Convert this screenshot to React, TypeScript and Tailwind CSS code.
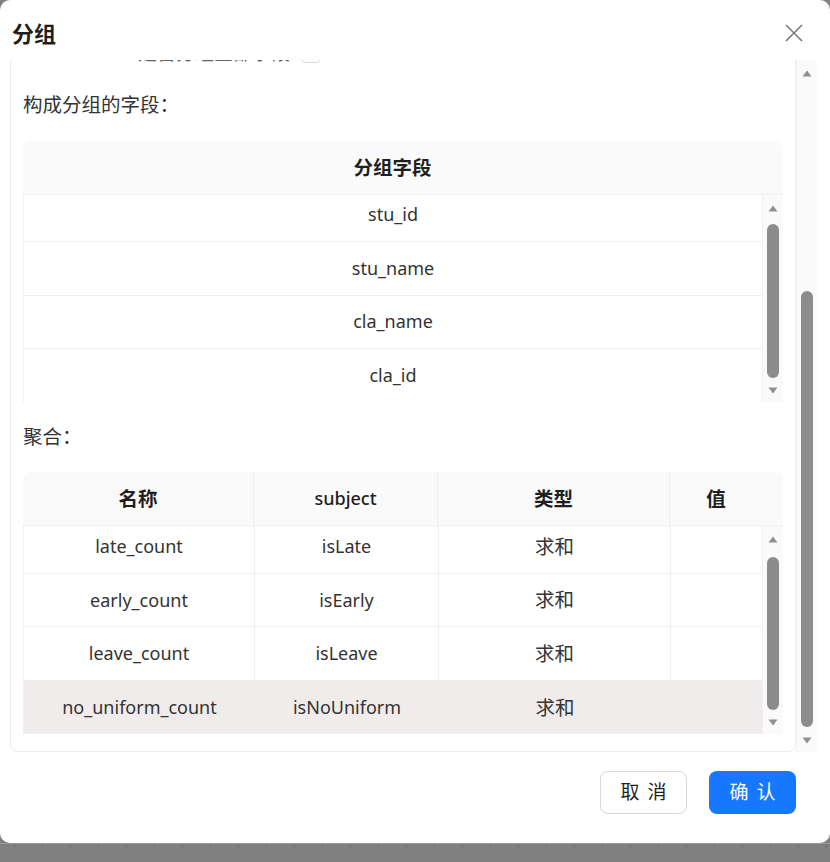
import React from 'react'

const font = { fontFamily: '"Noto Sans", "Noto Sans CJK SC", sans-serif' }

const groupFields = ['stu_id', 'stu_name', 'cla_name', 'cla_id', 'grade_id']

const aggRows = [
  { name: 'late_count', subject: 'isLate', type: '求和' },
  { name: 'early_count', subject: 'isEarly', type: '求和' },
  { name: 'leave_count', subject: 'isLeave', type: '求和' },
  { name: 'no_uniform_count', subject: 'isNoUniform', type: '求和', active: true },
]

function ArrowUp({ className = '' }: { className?: string }) {
  return (
    <svg width="10" height="7" viewBox="0 0 10 7" className={className}>
      <path d="M5 0.5 L9.5 6.5 L0.5 6.5 Z" fill="#8f8f8f" />
    </svg>
  )
}

function ArrowDown({ className = '' }: { className?: string }) {
  return (
    <svg width="10" height="7" viewBox="0 0 10 7" className={className}>
      <path d="M0.5 0.5 L9.5 0.5 L5 6.5 Z" fill="#8f8f8f" />
    </svg>
  )
}

function InnerScrollbar({ thumbTop, thumbHeight }: { thumbTop: number; thumbHeight: number }) {
  return (
    <div className="w-[21px] shrink-0 bg-[#fafafa] border-l border-[#f0f0f0] flex flex-col items-center">
      <ArrowUp className="mt-[10px] shrink-0" />
      <div
        className="w-[12px] shrink-0 rounded-full bg-[#8c8c8c]"
        style={{ marginTop: thumbTop, height: thumbHeight }}
      />
      <ArrowDown className="mt-[9px] shrink-0" />
    </div>
  )
}

export default function App() {
  return (
    <div className="w-[830px] h-[862px] bg-[#808080] overflow-hidden text-[#333]" style={font}>
      <div className="h-[843px] bg-white rounded-[10px] flex flex-col">
        {/* header */}
        <div className="h-[60px] shrink-0 flex items-center justify-between pl-3 pr-[27px] pt-[6px]">
          <h2 className="text-[22px] font-bold text-[#1f1f1f] leading-none">分组</h2>
          <svg width="18" height="18" viewBox="0 0 18 18">
            <path d="M1 1 L17 17 M17 1 L1 17" stroke="#7a7a7a" strokeWidth="1.6" />
          </svg>
        </div>

        {/* body */}
        <div className="h-[692px] shrink-0 flex ml-[10px] mr-[13px]">
          <div className="flex-1 border border-t-0 border-[#ececec] rounded-b-lg overflow-hidden px-[12px]">
            {/* row scrolled out of view: only its lower edge still shows */}
            <div className="h-[3px] overflow-hidden flex flex-col justify-end">
              <div className="h-[22px] shrink-0 flex items-end gap-3 pl-[115px] text-[19px] leading-none text-[#666]">
                <span>是否分组全部字段</span>
                <span className="w-[18px] h-[18px] border border-[#d9d9d9] rounded-[3px]" />
              </div>
            </div>

            <div className="mt-[28px] h-[28px] flex items-center text-[19.5px]">构成分组的字段：</div>

            {/* group fields table */}
            <div className="mt-[22px]">
              <div className="h-[54px] bg-[#fafafa] rounded-t-lg border-b border-[#f0f0f0] flex items-center justify-center pr-[21px] text-[19.5px] font-bold text-[#1f1f1f]">
                分组字段
              </div>
              <div className="h-[207px] flex border-l border-[#f0f0f0]">
                <div className="flex-1 overflow-hidden">
                  <div className="-mt-[7px]">
                    {groupFields.map((f) => (
                      <div
                        key={f}
                        className="h-[53.8px] border-b border-[#f0f0f0] flex items-center justify-center text-[18px]"
                      >
                        {f}
                      </div>
                    ))}
                  </div>
                </div>
                <InnerScrollbar thumbTop={12} thumbHeight={154} />
              </div>
            </div>

            <div className="mt-[21px] h-[28px] flex items-center text-[19.5px]">聚合：</div>

            {/* aggregation table */}
            <div className="mt-[21px]">
              <div className="h-[54px] bg-[#fafafa] rounded-t-lg border-b border-[#f0f0f0] grid grid-cols-[231px_184px_232px_1fr] text-[#1f1f1f]">
                <div className="flex items-center justify-center text-[19.5px] font-bold border-r border-[#f0f0f0]">名称</div>
                <div className="flex items-center justify-center text-[18px] font-medium border-r border-[#f0f0f0]">subject</div>
                <div className="flex items-center justify-center text-[19.5px] font-bold border-r border-[#f0f0f0]">类型</div>
                <div className="flex items-center justify-center text-[19.5px] font-bold pr-[21px]">值</div>
              </div>
              <div className="h-[208px] flex border-l border-[#f0f0f0]">
                <div className="flex-1 overflow-hidden">
                  <div className="-mt-[6px]">
                    {aggRows.map((r) => (
                      <div
                        key={r.name}
                        className={`h-[53.7px] grid grid-cols-[231px_184px_232px_1fr] text-[18px] ${
                          r.active ? 'bg-[#f1ecec]' : 'border-b border-[#f0f0f0]'
                        }`}
                      >
                        <div className={`flex items-center justify-center ${r.active ? '' : 'border-r border-[#f0f0f0]'}`}>{r.name}</div>
                        <div className={`flex items-center justify-center ${r.active ? '' : 'border-r border-[#f0f0f0]'}`}>{r.subject}</div>
                        <div className={`flex items-center justify-center text-[19.5px] ${r.active ? '' : 'border-r border-[#f0f0f0]'}`}>{r.type}</div>
                        <div />
                      </div>
                    ))}
                  </div>
                </div>
                <InnerScrollbar thumbTop={14} thumbHeight={153} />
              </div>
            </div>
          </div>

          {/* outer scrollbar */}
          <div className="w-[21px] shrink-0 bg-[#fafafa] border-l border-[#f3f3f3] flex flex-col items-center">
            <ArrowUp className="mt-[10px] shrink-0" />
            <div className="flex-1" />
            <div className="w-[12px] h-[436px] shrink-0 rounded-full bg-[#8c8c8c]" />
            <ArrowDown className="mt-[10px] mb-[8px] shrink-0" />
          </div>
        </div>

        {/* footer */}
        <div className="flex justify-end gap-[22px] pr-[34px] pt-[19px]">
          <button className="w-[87px] h-[43px] rounded-lg border border-[#d9d9d9] bg-white flex items-center justify-center gap-[8px] text-[19px] text-[#1f1f1f]">
            <span>取</span>
            <span>消</span>
          </button>
          <button className="w-[87px] h-[43px] rounded-lg bg-[#1677ff] flex items-center justify-center gap-[8px] text-[19px] text-white">
            <span>确</span>
            <span>认</span>
          </button>
        </div>
      </div>

      {/* page behind the modal */}
      <div className="border-t border-[#9a9a9a] flex">
        {Array.from({ length: 30 }).map((_, i) => (
          <div key={i} className="w-[28px] h-[4px] shrink-0 flex justify-center">
            <div className="w-[1px] h-[3px] bg-[#6e6e6e]" />
          </div>
        ))}
      </div>
    </div>
  )
}
